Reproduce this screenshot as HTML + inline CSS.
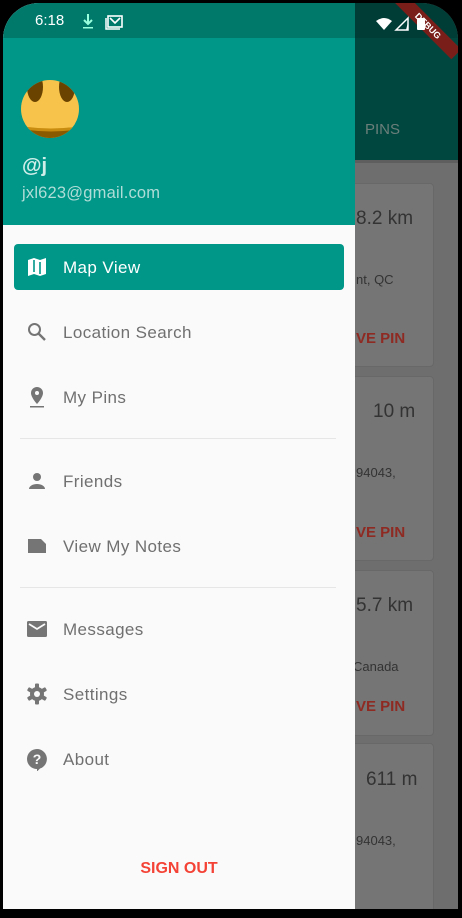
<!DOCTYPE html>
<html><head><meta charset="utf-8"><style>
*{margin:0;padding:0;box-sizing:border-box}
html,body{width:462px;height:918px;background:#000;overflow:hidden;font-family:"Liberation Sans",sans-serif}
#scr{position:absolute;left:3px;top:3px;width:455px;height:906px;border-radius:36px 36px 0 0;overflow:hidden;background:#6e6e6e}
.abs{position:absolute}
.card{position:absolute;left:-40px;width:471px;background:#757575;border:1px solid #686868;border-radius:4px}
.ct{position:absolute;color:#333;white-space:nowrap}
.rem{position:absolute;left:0;color:#8e2a22;font-weight:bold;font-size:15px}
.item{position:absolute;left:60px;font-size:17px;color:#707070;letter-spacing:.4px}
.ic{position:absolute;left:22px;width:24px;height:24px}
</style></head><body>
<div id="scr">
 <div class="abs" style="left:0;top:0;width:455px;height:35px;background:#003d36"></div>
 <div class="abs" style="left:0;top:35px;width:455px;height:122px;background:#00483f"></div>
 <div class="abs" style="left:362px;top:118px;color:#6b7e7a;font-size:15px">PINS</div>
 <div class="abs" style="left:0;top:157px;width:455px;height:3px;background:#5e5e5e"></div>
 <div class="abs" style="width:80px;height:14px;background:#7a1e1a;transform:rotate(45deg);color:#fff;font-size:9px;font-weight:bold;text-align:center;line-height:14px;left:385px;top:16px">DEBUG</div>
 <svg class="abs" style="left:373px;top:13px" width="60" height="16" viewBox="0 0 60 16">
  <path d="M0 5 Q8 -1 16 5 L8 14Z" fill="#fff"/><path d="M20 14 L32 2 L32 14Z" fill="none" stroke="#fff" stroke-width="1.5"/><path d="M30 14 L32 14 L32 6Z" fill="#fff"/>
  <rect x="41" y="2" width="8" height="12" rx="1" fill="#fff"/></svg>
 <div class="card" style="top:180px;height:184px"><div class="ct" style="left:392px;top:24px;font-size:19px">8.2 km</div><div class="ct" style="left:392px;top:88px;font-size:13px">nt, QC</div><div class="rem" style="left:392px;top:146px">VE PIN</div></div>
 <div class="card" style="top:373px;height:185px"><div class="ct" style="left:409px;top:24px;font-size:19px">10 m</div><div class="ct" style="left:392px;top:88px;font-size:13px">94043,</div><div class="rem" style="left:392px;top:147px">VE PIN</div></div>
 <div class="card" style="top:567px;height:166px"><div class="ct" style="left:392px;top:24px;font-size:19px">5.7 km</div><div class="ct" style="left:389px;top:88px;font-size:13px">Canada</div><div class="rem" style="left:392px;top:127px">VE PIN</div></div>
 <div class="card" style="top:740px;height:190px"><div class="ct" style="left:402px;top:25px;font-size:19px">611 m</div><div class="ct" style="left:392px;top:89px;font-size:13px">94043,</div></div>

 <div class="abs" style="left:0;top:0;width:352px;height:906px;background:#fafafa">
  <div class="abs" style="left:0;top:0;width:352px;height:35px;background:#00796b"></div>
  <div class="abs" style="left:0;top:35px;width:352px;height:187px;background:#009688"></div>
  <div class="abs" style="left:32px;top:9px;color:#fff;font-size:15px">6:18</div>
  <svg class="abs" style="left:78px;top:10px" width="14" height="18"><path d="M7 1V10M3 7L7 11L11 7" stroke="#9fd" stroke-width="2" fill="none"/><rect x="2" y="14" width="10" height="1.5" fill="#9fd"/></svg>
  <svg class="abs" style="left:102px;top:12px" width="18" height="15"><rect x="3" y="1" width="14" height="11" fill="none" stroke="#fff" stroke-width="1.6"/><path d="M1 3V14H15" stroke="#fff" stroke-width="1.5" fill="none"/><path d="M5 3L10 8L15 3" stroke="#fff" stroke-width="1.6" fill="none"/></svg>
  <svg class="abs" style="left:18px;top:76px" width="60" height="60" viewBox="0 0 60 60">
   <defs><clipPath id="c"><circle cx="29" cy="30" r="29"/></clipPath></defs>
   <g clip-path="url(#c)"><rect width="60" height="60" fill="#f8c34a"/>
   <ellipse cx="14" cy="8" rx="8" ry="15" fill="#6a4300"/>
   <ellipse cx="46" cy="8" rx="8" ry="15" fill="#6a4300"/>
   <path d="M0 49 Q30 54 60 49 L60 60 L0 60Z" fill="#8a5a00"/>
   <path d="M0 47 Q30 52 60 47 L60 50 Q30 55 0 50Z" fill="#c88c10"/></g></svg>
  <div class="abs" style="left:19px;top:152px;color:#cfeee9;font-size:20px;font-weight:bold">@j</div>
  <div class="abs" style="left:19px;top:181px;color:#b0ddd7;font-size:16.5px;letter-spacing:.2px">jxl623@gmail.com</div>

  <div class="abs" style="left:11px;top:241px;width:330px;height:46px;background:#009688;border-radius:4px"></div>
  <svg class="ic" style="top:252px" viewBox="0 0 24 24"><path d="M3 5 L9 3 L15 5 L21 3 V19 L15 21 L9 19 L3 21Z" fill="#fff"/><path d="M9 5V17M15 7V19" stroke="#009688" stroke-width="1.6"/></svg>
  <div class="item" style="top:255px;color:#fff">Map View</div>

  <svg class="ic" style="top:317px" viewBox="0 0 24 24"><circle cx="9.5" cy="9.5" r="5.5" fill="none" stroke="#757575" stroke-width="2"/><path d="M13.5 13.5L20 20" stroke="#757575" stroke-width="2.4"/></svg>
  <div class="item" style="top:320px">Location Search</div>
  <svg class="ic" style="top:382px" viewBox="0 0 24 24"><path d="M12 2C8.7 2 6 4.7 6 8c0 4.5 6 11 6 11s6-6.5 6-11c0-3.3-2.7-6-6-6z" fill="#757575"/><circle cx="12" cy="8" r="2" fill="#fafafa"/><rect x="5" y="21" width="14" height="1.5" fill="#757575"/></svg>
  <div class="item" style="top:385px">My Pins</div>
  <div class="abs" style="left:17px;top:435px;width:316px;height:1px;background:#e6e6e6"></div>
  <svg class="ic" style="top:466px" viewBox="0 0 24 24"><circle cx="12" cy="8" r="4" fill="#757575"/><path d="M4 20c0-3 4-5 8-5s8 2 8 5z" fill="#757575"/></svg>
  <div class="item" style="top:469px">Friends</div>
  <svg class="ic" style="top:531px" viewBox="0 0 24 24"><path d="M3 5H16L21 10V19H3Z" fill="#757575"/></svg>
  <div class="item" style="top:534px">View My Notes</div>
  <div class="abs" style="left:17px;top:584px;width:316px;height:1px;background:#e6e6e6"></div>
  <svg class="ic" style="top:614px" viewBox="0 0 24 24"><rect x="2" y="4" width="20" height="16" rx="1.5" fill="#757575"/><path d="M4 7L12 12L20 7" stroke="#fafafa" stroke-width="1.8" fill="none"/></svg>
  <div class="item" style="top:617px">Messages</div>
  <svg class="ic" style="top:679px" viewBox="0 0 24 24"><g fill="#757575"><circle cx="12" cy="12" r="7"/><rect x="10" y="1.5" width="4" height="21" rx="1"/><rect x="10" y="1.5" width="4" height="21" rx="1" transform="rotate(60 12 12)"/><rect x="10" y="1.5" width="4" height="21" rx="1" transform="rotate(120 12 12)"/></g><circle cx="12" cy="12" r="3" fill="#fafafa"/></svg>
  <div class="item" style="top:682px">Settings</div>
  <svg class="ic" style="top:744px" viewBox="0 0 24 24"><path d="M12 2a10 10 0 1 0 0 20v2.5l3-3A10 10 0 0 0 12 2z" fill="#757575"/><text x="12" y="17" font-size="14" font-weight="bold" text-anchor="middle" fill="#fafafa" font-family="Liberation Sans">?</text></svg>
  <div class="item" style="top:747px">About</div>
  <div class="abs" style="left:0;top:857px;width:352px;text-align:center;color:#f44336;font-weight:bold;font-size:16px">SIGN OUT</div>
 </div>
</div>
</body></html>
